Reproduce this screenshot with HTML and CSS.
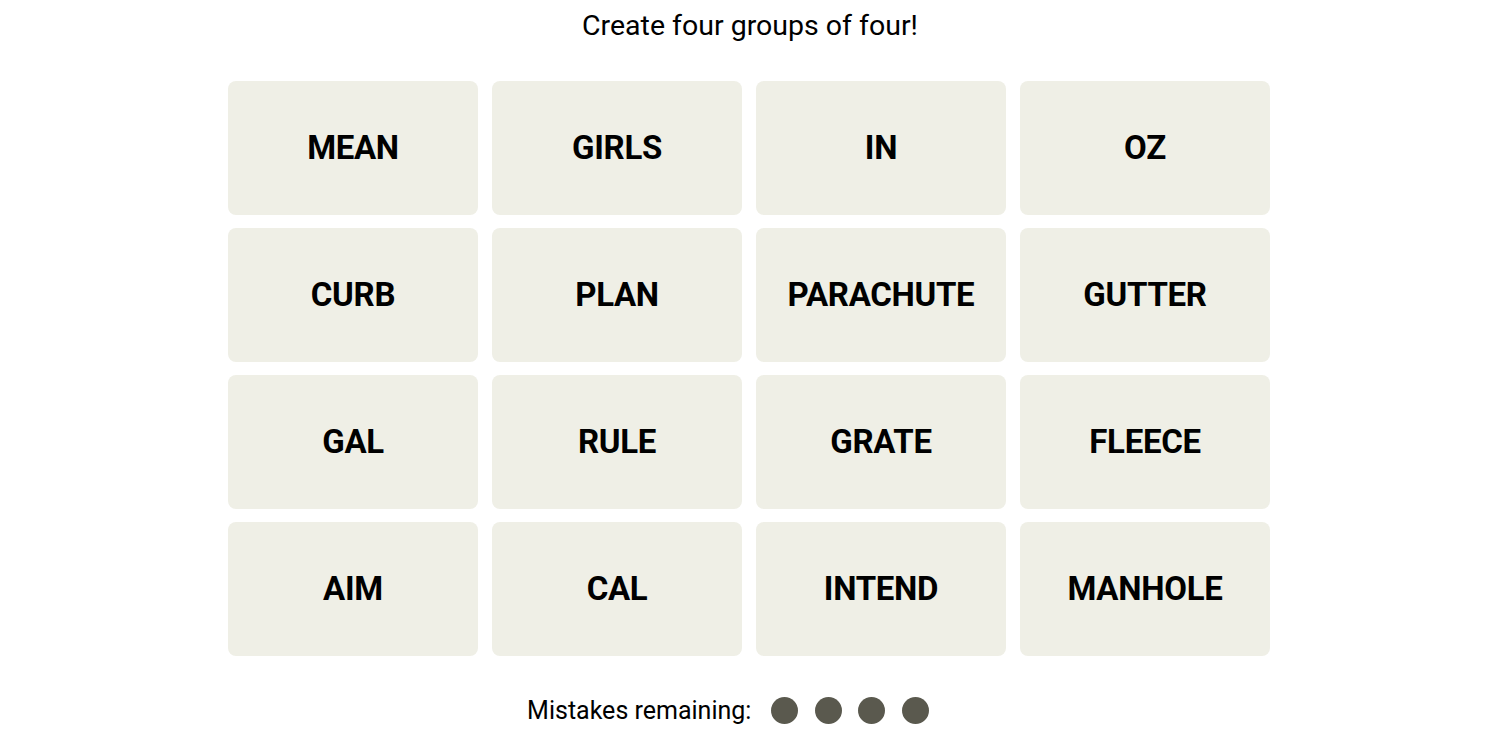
FILE: index.html
```html
<!DOCTYPE html>
<html lang="en">
<head>
<meta charset="utf-8">
<title>Connections</title>
<link rel="stylesheet" href="styles.css">
</head>
<body>
<main class="game">
  <h2 class="prompt">Create four groups of four!</h2>
  <div class="board">
    <div class="tile">MEAN</div>
    <div class="tile">GIRLS</div>
    <div class="tile">IN</div>
    <div class="tile">OZ</div>
    <div class="tile">CURB</div>
    <div class="tile">PLAN</div>
    <div class="tile">PARACHUTE</div>
    <div class="tile">GUTTER</div>
    <div class="tile">GAL</div>
    <div class="tile">RULE</div>
    <div class="tile">GRATE</div>
    <div class="tile">FLEECE</div>
    <div class="tile">AIM</div>
    <div class="tile">CAL</div>
    <div class="tile">INTEND</div>
    <div class="tile">MANHOLE</div>
  </div>
  <div class="mistakes">
    <span class="mistakes-label">Mistakes remaining:</span>
    <div class="bubbles">
      <span class="bubble"></span>
      <span class="bubble"></span>
      <span class="bubble"></span>
      <span class="bubble"></span>
    </div>
  </div>
</main>
</body>
</html>
```

FILE: styles.css
```css
html, body {
  margin: 0;
  padding: 0;
  background: #ffffff;
}

body {
  font-family: Roboto, "Liberation Sans", sans-serif;
  color: #000000;
}

.game {
  display: flex;
  flex-direction: column;
  align-items: center;
}

.prompt {
  margin: 0;
  padding-top: 1px;
  height: 50px;
  line-height: 50px;
  font-size: 28.5px;
  font-weight: 400;
  color: #000;
}

.board {
  margin-top: 30px;
  margin-right: 2px;
  display: grid;
  grid-template-columns: repeat(4, 250px);
  grid-auto-rows: 133.5px;
  gap: 13.5px 14px;
}

.tile {
  background: #efefe6;
  border-radius: 8px;
  display: flex;
  align-items: center;
  justify-content: center;
  font-size: 33px;
  font-weight: 700;
  letter-spacing: -0.3px;
  color: #000;
}

.mistakes {
  margin-top: 40px;
  margin-right: 44px;
  height: 30px;
  display: flex;
  align-items: center;
  gap: 20px;
}

.mistakes-label {
  font-size: 25px;
  line-height: 30px;
}

.bubbles {
  display: flex;
  gap: 16.5px;
}

.bubble {
  width: 27px;
  height: 27px;
  border-radius: 50%;
  background: #5a594e;
}
```
